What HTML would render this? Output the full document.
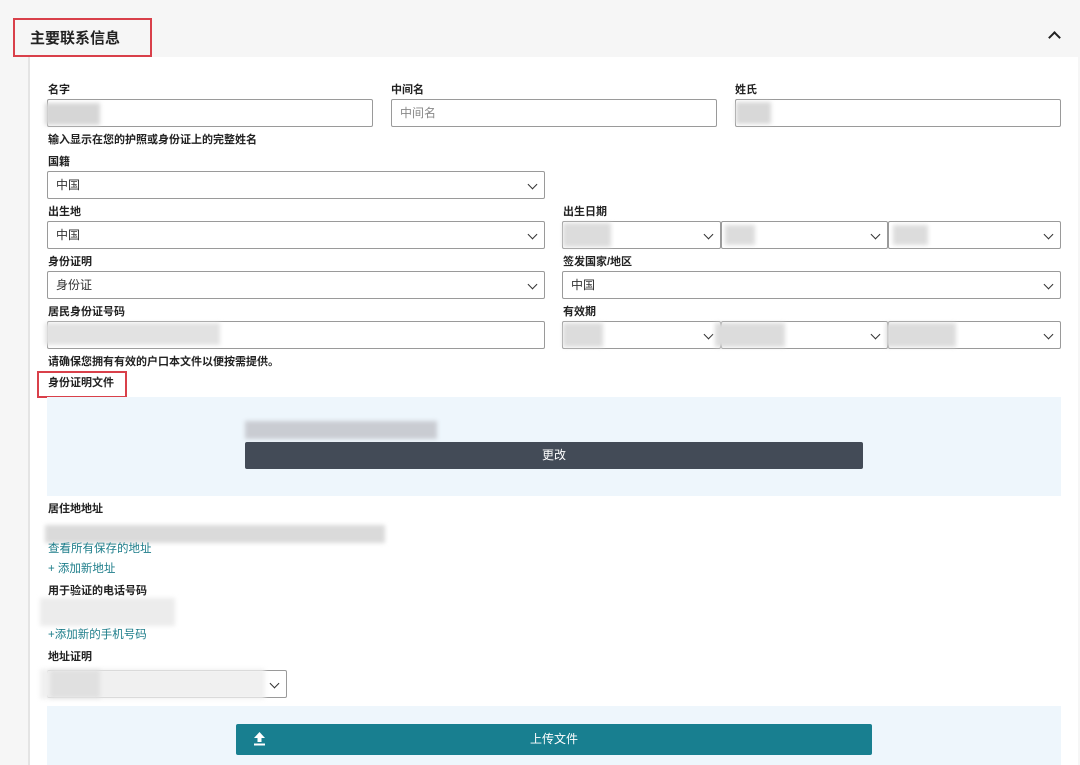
<!DOCTYPE html>
<html><head><meta charset="utf-8"><style>
*{box-sizing:border-box;margin:0;padding:0}
body{width:1080px;height:765px;overflow:hidden;background:#f6f6f6;font-family:"Liberation Sans","Noto Sans CJK SC",sans-serif;color:#222;position:relative}
.a{position:absolute}
.card{left:28px;top:57px;width:1050px;height:708px;background:#fff;border-left:2px solid #e4e4e4}
.lb{position:absolute;font-size:11px;font-weight:bold;color:#222;line-height:14px}
.in{position:absolute;height:28px;border:1px solid #9a9a9a;border-radius:2px;background:#fff;font-size:12px;color:#333;padding:0 8px;line-height:26px}
.ch{position:absolute;right:8px;top:9px;width:7px;height:7px;border-right:1.6px solid #333;border-bottom:1.6px solid #333;transform:rotate(45deg)}
.bl{position:absolute;background:#dcdcdc;filter:blur(2px)}
.lk{position:absolute;font-size:11.5px;color:#1d7d8a;line-height:14px}
</style></head><body>
<div class="a" style="left:13px;top:18px;width:139px;height:39px;border:2px solid #d9404a"></div>
<div class="a" style="left:30px;top:27px;font-size:15px;font-weight:bold;color:#222">主要联系信息</div>
<div class="a" style="left:1050px;top:33px;width:9px;height:9px;border-left:2px solid #222;border-top:2px solid #222;transform:rotate(45deg)"></div>
<div class="a card"></div>

<div class="lb" style="left:48px;top:83px">名字</div>
<div class="lb" style="left:391px;top:83px">中间名</div>
<div class="lb" style="left:735px;top:83px">姓氏</div>
<div class="in" style="left:47px;top:99px;width:326px"></div>
<div class="bl" style="left:45px;top:103px;width:55px;height:22px;background:#d6d6d6"></div>
<div class="in" style="left:391px;top:99px;width:326px;color:#888">中间名</div>
<div class="in" style="left:735px;top:99px;width:326px"></div>
<div class="bl" style="left:736px;top:102px;width:35px;height:22px;background:#d8d8d8"></div>
<div class="lb" style="left:48px;top:133px">输入显示在您的护照或身份证上的完整姓名</div>
<div class="lb" style="left:48px;top:155px">国籍</div>
<div class="in" style="left:47px;top:171px;width:498px">中国<i class="ch"></i></div>
<div class="lb" style="left:48px;top:205px">出生地</div>
<div class="in" style="left:47px;top:221px;width:498px">中国<i class="ch"></i></div>
<div class="lb" style="left:563px;top:205px">出生日期</div>
<div class="in" style="left:562px;top:221px;width:159px"><i class="ch"></i></div>
<div class="in" style="left:721px;top:221px;width:167px"><i class="ch"></i></div>
<div class="in" style="left:888px;top:221px;width:173px"><i class="ch"></i></div>
<div class="bl" style="left:563px;top:223px;width:48px;height:24px"></div>
<div class="bl" style="left:725px;top:225px;width:30px;height:20px"></div>
<div class="bl" style="left:893px;top:225px;width:35px;height:20px"></div>
<div class="lb" style="left:48px;top:255px">身份证明</div>
<div class="in" style="left:47px;top:271px;width:498px">身份证<i class="ch"></i></div>
<div class="lb" style="left:563px;top:255px">签发国家/地区</div>
<div class="in" style="left:562px;top:271px;width:499px">中国<i class="ch"></i></div>
<div class="lb" style="left:48px;top:305px">居民身份证号码</div>
<div class="in" style="left:47px;top:321px;width:498px"></div>
<div class="bl" style="left:45px;top:323px;width:175px;height:22px;background:#e2e2e2"></div>
<div class="lb" style="left:563px;top:305px">有效期</div>
<div class="in" style="left:562px;top:321px;width:159px"><i class="ch"></i></div>
<div class="in" style="left:721px;top:321px;width:167px"><i class="ch"></i></div>
<div class="in" style="left:888px;top:321px;width:173px"><i class="ch"></i></div>
<div class="bl" style="left:563px;top:323px;width:40px;height:24px"></div>
<div class="bl" style="left:715px;top:323px;width:70px;height:24px"></div>
<div class="bl" style="left:886px;top:323px;width:70px;height:24px"></div>
<div class="lb" style="left:48px;top:355px">请确保您拥有有效的户口本文件以便按需提供。</div>
<div class="a" style="left:37px;top:371px;width:90px;height:27px;border:2px solid #d9404a"></div>
<div class="lb" style="left:48px;top:376px">身份证明文件</div>

<div class="a" style="left:47px;top:397px;width:1014px;height:99px;background:#eef6fc"></div>
<div class="bl" style="left:245px;top:421px;width:192px;height:18px;background:#c9ccd2"></div>
<div class="a" style="left:245px;top:442px;width:618px;height:27px;background:#434b57;border-radius:2px;color:#fff;font-size:12px;text-align:center;line-height:27px">更改</div>

<div class="lb" style="left:48px;top:502px">居住地地址</div>
<div class="bl" style="left:45px;top:525px;width:340px;height:18px;background:#dadada"></div>
<div class="lk" style="left:48px;top:542px">查看所有保存的地址</div>
<div class="lk" style="left:48px;top:562px">+ 添加新地址</div>
<div class="lb" style="left:48px;top:584px">用于验证的电话号码</div>
<div class="bl" style="left:40px;top:598px;width:135px;height:28px;background:#ececec"></div>
<div class="lk" style="left:48px;top:628px">+添加新的手机号码</div>
<div class="lb" style="left:48px;top:650px">地址证明</div>
<div class="in" style="left:47px;top:670px;width:240px"><i class="ch"></i></div>
<div class="bl" style="left:40px;top:669px;width:225px;height:30px;background:#f0f0f0"></div>
<div class="bl" style="left:50px;top:670px;width:50px;height:28px;background:#e0e0e0"></div>

<div class="a" style="left:47px;top:706px;width:1014px;height:59px;background:#eef6fc"></div>
<div class="a" style="left:236px;top:724px;width:636px;height:31px;background:#187f90;border-radius:2px;color:#fff;font-size:12px;text-align:center;line-height:31px">上传文件</div>
<svg class="a" style="left:253px;top:731px" width="13" height="15" viewBox="0 0 13 15"><path d="M6.5 1 L12 7 H8.5 V11 H4.5 V7 H1 Z" fill="#fff"/><rect x="1" y="12.5" width="11" height="2" fill="#fff"/></svg>
</body></html>
